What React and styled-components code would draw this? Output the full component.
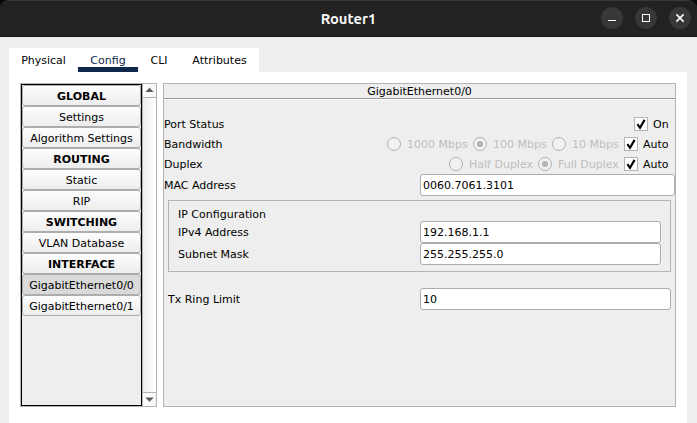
import React from "react";
import styled, { createGlobalStyle } from "styled-components";

const GlobalStyle = createGlobalStyle`
  *, *::before, *::after { box-sizing: border-box; }
  body { margin: 0; background: #fff; overflow: hidden; }
`;

const Window = styled.div`
  width: 697px;
  height: 423px;
  display: flex;
  flex-direction: column;
  background: #eee;
  color: #000;
  font: 11px/14px "DejaVu Sans", Verdana, sans-serif;
  white-space: nowrap;
`;

const TitleFrame = styled.header`
  height: 37px;
  flex: none;
  background: #0a0a0a;
`;

const TitleBar = styled.div`
  height: 37px;
  display: grid;
  grid-template-columns: 1fr auto 1fr;
  align-items: center;
  background: #222;
  border-top: 1px solid #383838;
  border-bottom: 1px solid #161616;
  border-radius: 9px 9px 0 0;
`;

const Title = styled.h1`
  grid-column: 2;
  margin: 0;
  color: #f7f7f7;
  font: bold 14.67px/20px Ubuntu, "Noto Sans", sans-serif;
`;

const WindowButtons = styled.div`
  display: flex;
  justify-content: flex-end;
  gap: 12px;
  padding: 0 6px 1px 0;
`;

const WindowButton = styled.button`
  width: 22px;
  height: 22px;
  padding: 0;
  border: 0;
  border-radius: 50%;
  background: #373737;
  display: block;

  svg { display: block; }
`;

const Tabs = styled.nav`
  display: flex;
  flex: none;
  width: 250px;
  height: 24px;
  margin: 11px 0 0 9px;
  background: #fff;
`;

const Tab = styled.button`
  width: ${(p) => p.$width}px;
  height: 24px;
  padding: 6px 0 0;
  border: 0;
  border-bottom: 5px solid ${(p) => (p.$active ? "#0d274d" : "transparent")};
  background: transparent;
  color: ${(p) => (p.$active ? "#0d274d" : "#000")};
  font: inherit;
  text-align: center;
`;

const Content = styled.main`
  flex: 1;
  width: 678px;
  margin-left: 9px;
  padding: 11px;
  display: flex;
  gap: 6px;
  background: #fff;
`;

const Sidebar = styled.aside`
  display: flex;
  width: 137px;
  height: 324px;
  border: 1px solid #b4b4b4;
`;

const SidebarList = styled.div`
  width: 121px;
  border: 1px solid #000;
  background: #eee;
`;

const SidebarItem = styled.button`
  display: block;
  width: 119px;
  height: 21px;
  padding: 2px 0 0;
  border: 1px solid #adadad;
  border-radius: 3px;
  background: ${(p) => (p.$active ? "#dadada" : "linear-gradient(#fdfdfd, #ededed)")};
  color: #000;
  font: inherit;
  font-weight: ${(p) => (p.$heading ? "bold" : "normal")};
  line-height: 17px;
  text-align: center;
`;

const Scrollbar = styled.div`
  flex: 1;
  display: flex;
  flex-direction: column;
  justify-content: space-between;
  background: linear-gradient(90deg, #eee, #fff);
  border-left: 1px solid #b4b4b4;
`;

const ScrollArrow = styled.div`
  height: 14px;
  background: linear-gradient(90deg, #fff, #f4f4f4);
  border-${(p) => (p.$down ? "top" : "bottom")}: 1px solid #b4b4b4;

  svg { display: block; }
`;

const Panel = styled.section`
  width: 513px;
  height: 324px;
  border: 1px solid #b4b4b4;
  background: #eee;
`;

const PanelTitle = styled.div`
  height: 16px;
  padding-top: 1px;
  border-bottom: 1px solid #fff;
  box-shadow: inset 0 -1px #999;
  line-height: 14px;
  text-align: center;
`;

const Form = styled.div`
  padding-top: 14px;
`;

const Row = styled.div`
  display: flex;
  align-items: center;
  height: ${(p) => p.$height || 20}px;
`;

const Label = styled.label`
  width: ${(p) => p.$width}px;
  flex: none;
  padding-top: 2px;
`;

const Options = styled.div`
  flex: 1;
  display: flex;
  justify-content: flex-end;
`;

const Option = styled.label`
  width: ${(p) => p.$width}px;
  display: flex;
  align-items: center;
  gap: ${(p) => (p.$radio ? 6 : 5)}px;
  color: ${(p) => (p.$radio ? "#bebebe" : "#000")};

  svg { flex: none; }
`;

const OptionText = styled.span`
  padding-top: 2px;
`;

const Field = styled.input`
  width: ${(p) => p.$width}px;
  height: 22px;
  padding: 0 2px;
  border: 1px solid #adadad;
  border-radius: 3px;
  outline: 0;
  background: #fff;
  color: #000;
  font: inherit;
`;

const Group = styled.fieldset`
  width: 503px;
  height: 72px;
  margin: 4px 0 16px 4px;
  padding: 6px 0 0 9px;
  border: 1px solid #b4b4b4;
`;

const GroupTitle = styled.div`
  height: 14px;
  padding-top: 1px;
`;

const TxRow = styled(Row)`
  padding-left: 4px;
`;

const Check = () => (
  <svg width="14" height="14" viewBox="0 0 14 14">
    <rect x=".5" y=".5" width="13" height="13" fill="#fff" stroke="#b4b4b4" />
    <path d="M3.4 7.1 6 10.8 10.6 2.9" fill="none" stroke="#000" strokeWidth="2.1" />
  </svg>
);

const Radio = ({ on }) => (
  <svg width="14" height="14" viewBox="0 0 14 14">
    <circle cx="7" cy="7" r="6.5" fill="#f1f1f1" stroke="#b0b0b0" />
    {on && <circle cx="7" cy="7" r="3.1" fill="#b4b4b4" />}
  </svg>
);

const CheckOption = ({ label, width }) => (
  <Option $width={width}><Check /><OptionText>{label}</OptionText></Option>
);

const RadioOption = ({ label, width, on }) => (
  <Option $radio $width={width}><Radio on={on} /><OptionText>{label}</OptionText></Option>
);

const sidebarItems = [
  ["GLOBAL", true], ["Settings"], ["Algorithm Settings"],
  ["ROUTING", true], ["Static"], ["RIP"],
  ["SWITCHING", true], ["VLAN Database"],
  ["INTERFACE", true], ["GigabitEthernet0/0"], ["GigabitEthernet0/1"],
];

export default function App() {
  return (
    <>
      <GlobalStyle />
      <Window>
        <TitleFrame>
          <TitleBar>
            <Title>Router1</Title>
            <WindowButtons>
              <WindowButton aria-label="Minimize">
                <svg width="22" height="22"><path d="M7 13.5h8" stroke="#fff" /></svg>
              </WindowButton>
              <WindowButton aria-label="Maximize">
                <svg width="22" height="22"><rect x="7.5" y="7.5" width="7" height="7" fill="none" stroke="#fff" /></svg>
              </WindowButton>
              <WindowButton aria-label="Close">
                <svg width="22" height="22"><path d="m7.4 7.4 7.2 7.2m0-7.2-7.2 7.2" stroke="#fff" strokeWidth="1.6" /></svg>
              </WindowButton>
            </WindowButtons>
          </TitleBar>
        </TitleFrame>
        <Tabs>
          <Tab $width={69}>Physical</Tab>
          <Tab $width={60} $active>Config</Tab>
          <Tab $width={42}>CLI</Tab>
          <Tab $width={79}>Attributes</Tab>
        </Tabs>
        <Content>
          <Sidebar>
            <SidebarList>
              {sidebarItems.map(([name, heading]) => (
                <SidebarItem key={name} $heading={heading} $active={name === "GigabitEthernet0/0"}>
                  {name}
                </SidebarItem>
              ))}
            </SidebarList>
            <Scrollbar>
              <ScrollArrow>
                <svg width="13" height="13"><path d="M2.3 8h8.4L6.5 3.8z" fill="#5a5a5a" /></svg>
              </ScrollArrow>
              <ScrollArrow $down>
                <svg width="13" height="13"><path d="M2.3 4.5h8.4L6.5 8.7z" fill="#5a5a5a" /></svg>
              </ScrollArrow>
            </Scrollbar>
          </Sidebar>
          <Panel>
            <PanelTitle>GigabitEthernet0/0</PanelTitle>
            <Form>
              <Row>
                <Label $width={120}>Port Status</Label>
                <Options><CheckOption label="On" width={41} /></Options>
              </Row>
              <Row>
                <Label $width={120}>Bandwidth</Label>
                <Options>
                  <RadioOption label="1000 Mbps" width={86} />
                  <RadioOption label="100 Mbps" width={79} on />
                  <RadioOption label="10 Mbps" width={72} />
                  <CheckOption label="Auto" width={51} />
                </Options>
              </Row>
              <Row>
                <Label $width={120}>Duplex</Label>
                <Options>
                  <RadioOption label="Half Duplex" width={89} />
                  <RadioOption label="Full Duplex" width={86} on />
                  <CheckOption label="Auto" width={51} />
                </Options>
              </Row>
              <Row $height={22}>
                <Label $width={256}>MAC Address</Label>
                <Field $width={255} defaultValue="0060.7061.3101" />
              </Row>
              <Group>
                <GroupTitle>IP Configuration</GroupTitle>
                <Row $height={22}>
                  <Label $width={242}>IPv4 Address</Label>
                  <Field $width={241} defaultValue="192.168.1.1" />
                </Row>
                <Row $height={22}>
                  <Label $width={242}>Subnet Mask</Label>
                  <Field $width={241} defaultValue="255.255.255.0" />
                </Row>
              </Group>
              <TxRow $height={22}>
                <Label $width={252}>Tx Ring Limit</Label>
                <Field $width={251} defaultValue="10" />
              </TxRow>
            </Form>
          </Panel>
        </Content>
      </Window>
    </>
  );
}
